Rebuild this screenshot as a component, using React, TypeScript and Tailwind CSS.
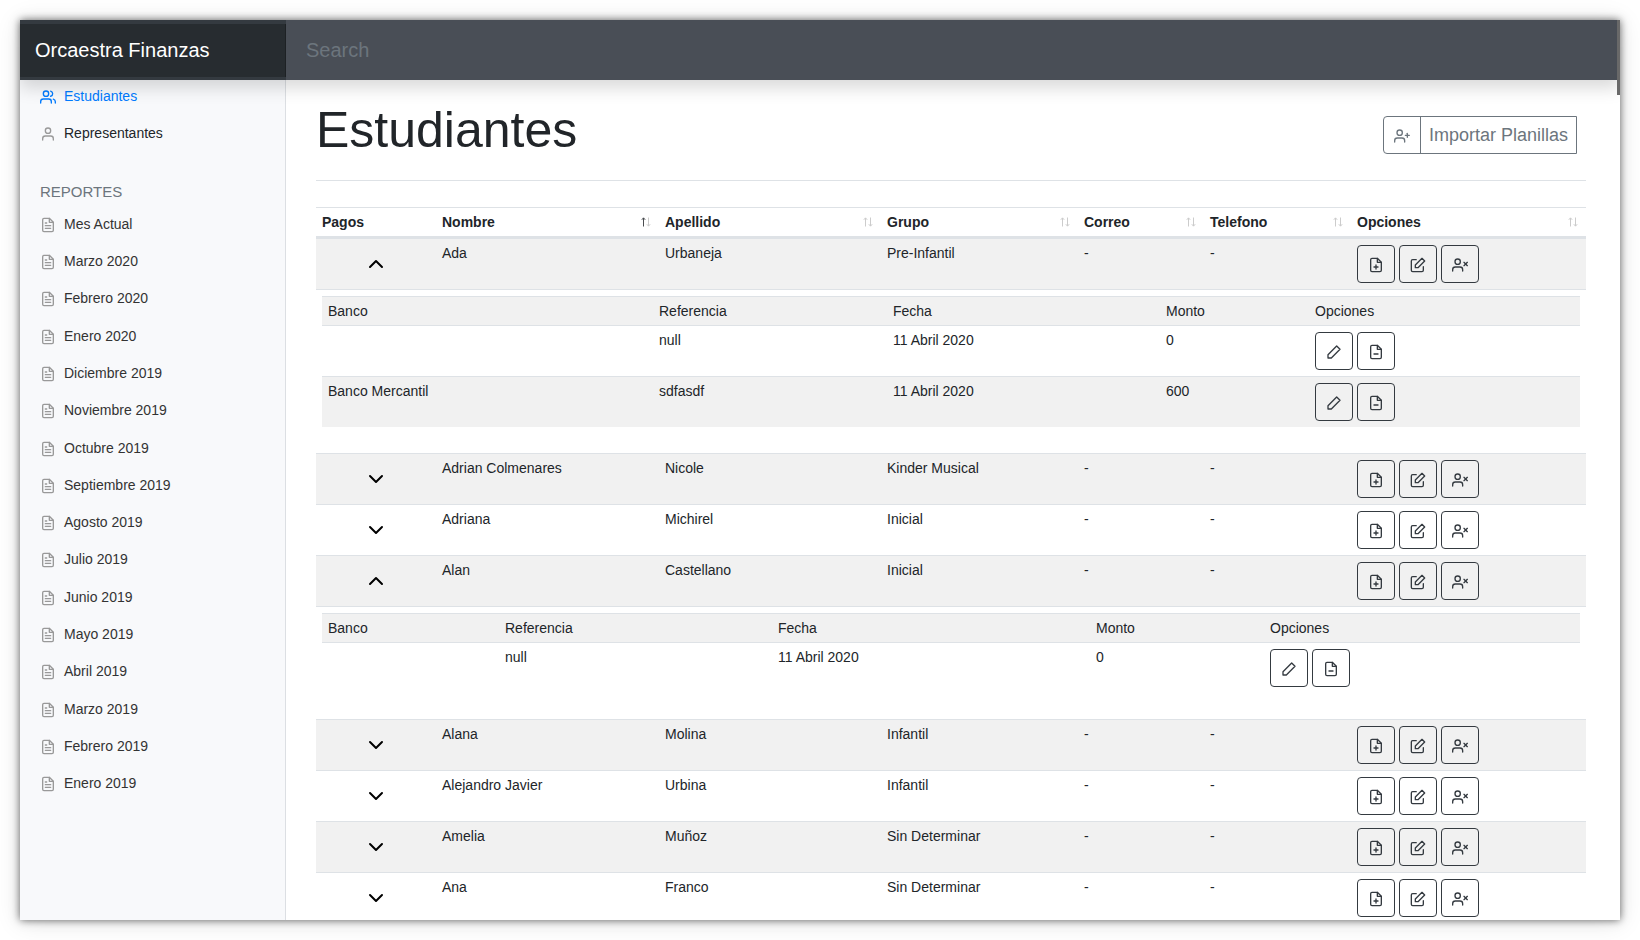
import { ReactNode } from "react";
import {
  FiChevronDown,
  FiChevronUp,
  FiFileMinus,
  FiFilePlus,
  FiFileText,
  FiUser,
  FiUserPlus,
  FiUsers,
  FiUserX,
} from "react-icons/fi";

type Payment = { bank: string; reference: string; date: string; amount: number };
type Student = {
  name: string;
  surname: string;
  group: string;
  payments?: Payment[];
  columns?: string[];
};

const wideColumns = ["w-[331px]", "w-[234px]", "w-[273px]", "w-[149px]", "w-[271px]"];
const narrowColumns = ["w-[177px]", "w-[273px]", "w-[318px]", "w-[174px]", "w-[316px]"];

const students: Student[] = [
  {
    name: "Ada",
    surname: "Urbaneja",
    group: "Pre-Infantil",
    columns: wideColumns,
    payments: [
      { bank: "", reference: "null", date: "11 Abril 2020", amount: 0 },
      { bank: "Banco Mercantil", reference: "sdfasdf", date: "11 Abril 2020", amount: 600 },
    ],
  },
  { name: "Adrian Colmenares", surname: "Nicole", group: "Kinder Musical" },
  { name: "Adriana", surname: "Michirel", group: "Inicial" },
  {
    name: "Alan",
    surname: "Castellano",
    group: "Inicial",
    columns: narrowColumns,
    payments: [{ bank: "", reference: "null", date: "11 Abril 2020", amount: 0 }],
  },
  { name: "Alana", surname: "Molina", group: "Infantil" },
  { name: "Alejandro Javier", surname: "Urbina", group: "Infantil" },
  { name: "Amelia", surname: "Muñoz", group: "Sin Determinar" },
  { name: "Ana", surname: "Franco", group: "Sin Determinar" },
];

const shaded = [true, true, false, true, true, false, true, false];

const months = [
  "Mes Actual",
  "Marzo 2020",
  "Febrero 2020",
  "Enero 2020",
  "Diciembre 2019",
  "Noviembre 2019",
  "Octubre 2019",
  "Septiembre 2019",
  "Agosto 2019",
  "Julio 2019",
  "Junio 2019",
  "Mayo 2019",
  "Abril 2019",
  "Marzo 2019",
  "Febrero 2019",
  "Enero 2019",
];

const headers = [
  { label: "Pagos", width: "w-[120px]", sort: "none" },
  { label: "Nombre", width: "w-[223px]", sort: "asc" },
  { label: "Apellido", width: "w-[222px]", sort: "both" },
  { label: "Grupo", width: "w-[197px]", sort: "both" },
  { label: "Correo", width: "w-[126px]", sort: "both" },
  { label: "Telefono", width: "w-[147px]", sort: "both" },
  { label: "Opciones", width: "w-[235px]", sort: "both" },
];

const cell = "border-t border-[#dee2e6] p-1.5 align-top";

function PencilIcon() {
  return (
    <svg
      viewBox="0 0 24 24"
      className="size-4"
      fill="none"
      stroke="currentColor"
      strokeWidth="2"
      strokeLinecap="round"
      strokeLinejoin="round"
      aria-hidden="true"
    >
      <polygon points="16 3 21 8 8 21 3 21 3 16 16 3" />
    </svg>
  );
}

function EditIcon() {
  return (
    <svg
      viewBox="0 0 24 24"
      className="size-4"
      fill="none"
      stroke="currentColor"
      strokeWidth="2"
      strokeLinecap="round"
      strokeLinejoin="round"
      aria-hidden="true"
    >
      <path d="M20 14.66V20a2 2 0 0 1-2 2H4a2 2 0 0 1-2-2V6a2 2 0 0 1 2-2h5.34" />
      <polygon points="18 2 22 6 12 16 8 16 8 12 18 2" />
    </svg>
  );
}

function IconButton({ label, children }: { label: string; children: ReactNode }) {
  return (
    <button
      type="button"
      aria-label={label}
      className="flex size-[38px] items-center justify-center rounded border border-[#343a40] pt-0.5 text-[#343a40]"
    >
      {children}
    </button>
  );
}

function NavItem({ icon, tone, children }: { icon: ReactNode; tone: string; children: ReactNode }) {
  return (
    <li className="flex-1">
      <a href="#" className={`flex h-full items-center gap-2 px-5 ${tone}`}>
        <span className="pt-0.5">{icon}</span>
        {children}
      </a>
    </li>
  );
}

function SortIcon({ sort }: { sort: string }) {
  return (
    <svg viewBox="0 0 10 10" className="size-2.5" fill="none" aria-hidden="true">
      <path d="M2.5 9.5V1M0.8 2.8L2.5 0.8L4.2 2.8" stroke={sort === "asc" ? "#4a4d50" : "#cccccc"} />
      <path d="M7.5 0.5V9M5.8 7.2L7.5 9.2L9.2 7.2" stroke="#cccccc" />
    </svg>
  );
}

function PaymentsTable({ payments, columns }: { payments: Payment[]; columns: string[] }) {
  return (
    <table className="mb-5 w-full table-fixed border-separate border-spacing-0">
      <thead>
        <tr className="bg-[#f1f1f1]">
          {["Banco", "Referencia", "Fecha", "Monto", "Opciones"].map((label, i) => (
            <th key={label} className={`${cell} ${columns[i]} text-left font-normal`}>
              {label}
            </th>
          ))}
        </tr>
      </thead>
      <tbody>
        {payments.map((p, i) => (
          <tr key={i} className={i % 2 ? "bg-[#f1f1f1]" : "bg-white"}>
            <td className={cell}>{p.bank}</td>
            <td className={cell}>{p.reference}</td>
            <td className={cell}>{p.date}</td>
            <td className={cell}>{p.amount}</td>
            <td className={cell}>
              <div className="flex gap-1">
                <IconButton label="Editar pago">
                  <PencilIcon />
                </IconButton>
                <IconButton label="Eliminar pago">
                  <FiFileMinus size={16} />
                </IconButton>
              </div>
            </td>
          </tr>
        ))}
      </tbody>
    </table>
  );
}

function StudentRows({ student, dark }: { student: Student; dark: boolean }) {
  return (
    <>
      <tr className={dark ? "bg-[#f1f1f1]" : "bg-white"}>
        <td className={cell}>
          <button type="button" aria-label="Ver pagos" className="flex h-[38px] w-full items-center justify-center text-black">
            {student.payments ? <FiChevronUp size={24} /> : <FiChevronDown size={24} />}
          </button>
        </td>
        <td className={cell}>{student.name}</td>
        <td className={cell}>{student.surname}</td>
        <td className={cell}>{student.group}</td>
        <td className={cell}>-</td>
        <td className={cell}>-</td>
        <td className={cell}>
          <div className="flex gap-1">
            <IconButton label="Agregar pago">
              <FiFilePlus size={16} />
            </IconButton>
            <IconButton label="Editar estudiante">
              <EditIcon />
            </IconButton>
            <IconButton label="Eliminar estudiante">
              <FiUserX size={16} />
            </IconButton>
          </div>
        </td>
      </tr>
      {student.payments && (
        <tr>
          <td colSpan={7} className={cell}>
            <PaymentsTable payments={student.payments} columns={student.columns ?? wideColumns} />
          </td>
        </tr>
      )}
    </>
  );
}

export default function App() {
  return (
    <div className="h-screen bg-white p-5 font-['Liberation_Sans',Arial,sans-serif] text-sm/4 text-[#212529]">
      <div className="relative flex h-full flex-col overflow-hidden bg-white shadow-[0_0_8px_rgba(0,0,0,0.6),0_2px_24px_rgba(0,0,0,0.12)]">
        <header className="z-10 flex h-[60px] shrink-0 bg-[#343a40] shadow-[0_8px_16px_rgba(0,0,0,0.15)]">
          <div className="w-[266px] shrink-0 pt-1 pb-[3px]">
            <a
              href="#"
              className="flex h-full items-center bg-[#272c30] px-[15px] pb-0.5 text-xl text-white shadow-[inset_-1px_0_0_rgba(0,0,0,0.25)]"
            >
              Orcaestra Finanzas
            </a>
          </div>
          <input
            type="text"
            aria-label="Search"
            placeholder="Search"
            className="min-w-0 flex-1 bg-[#494e56] px-5 text-xl text-white outline-none placeholder:text-[#6c757d]"
          />
        </header>

        <div className="flex min-h-0 flex-1">
          <nav className="w-[266px] shrink-0 overflow-hidden border-r border-[#dcdfe3] bg-[#f8f9fb]">
            <ul className="-mt-[3px] flex h-[74px] flex-col">
              <NavItem tone="text-[#007bff]" icon={<FiUsers size={16} />}>
                Estudiantes
              </NavItem>
              <NavItem tone="text-[#212529]" icon={<FiUser size={16} className="text-[#999999]" />}>
                Representantes
              </NavItem>
            </ul>
            <h2 className="mt-[33px] mb-[5px] px-5 text-[15px]/4 text-[#6c757d] uppercase">Reportes</h2>
            <ul className="flex h-[597px] flex-col">
              {months.map((month, i) => (
                <NavItem key={i} tone="text-[#333333]" icon={<FiFileText size={16} className="text-[#999999]" />}>
                  {month}
                </NavItem>
              ))}
            </ul>
          </nav>

          <main className="min-w-0 flex-1 overflow-hidden pr-[34px] pl-[30px]">
            <div className="mb-[26px] flex items-center justify-between border-b border-[#dee2e6] pt-5 pr-[9px] pb-5">
              <h1 className="text-[50px]/[60px]">Estudiantes</h1>
              <button type="button" className="mt-2.5 flex h-[38px] rounded-l border border-[#6c757d] text-[#6c757d]">
                <span className="flex h-full w-[37px] items-center justify-center border-r border-[#6c757d] pt-0.5">
                  <FiUserPlus size={16} />
                </span>
                <span className="flex h-full items-center px-2 text-lg">Importar Planillas</span>
              </button>
            </div>

            <table className="w-full table-fixed border-separate border-spacing-0">
              <thead>
                <tr>
                  {headers.map(({ label, width, sort }) => (
                    <th
                      key={label}
                      className={`${width} border-t border-b-3 border-t-[#dee2e6] border-b-[#dee2e6] p-1.5 text-left font-bold`}
                    >
                      <div className="flex items-center justify-between pr-0.5">
                        {label}
                        {sort !== "none" && <SortIcon sort={sort} />}
                      </div>
                    </th>
                  ))}
                </tr>
              </thead>
              <tbody className="[&>tr:first-child>td]:border-t-0">
                {students.map((student, i) => (
                  <StudentRows key={student.name} student={student} dark={shaded[i]} />
                ))}
              </tbody>
            </table>
          </main>
        </div>
        <div className="absolute top-0 right-0 z-20 h-[75px] w-[3px] bg-[#696969]" />
      </div>
    </div>
  );
}
